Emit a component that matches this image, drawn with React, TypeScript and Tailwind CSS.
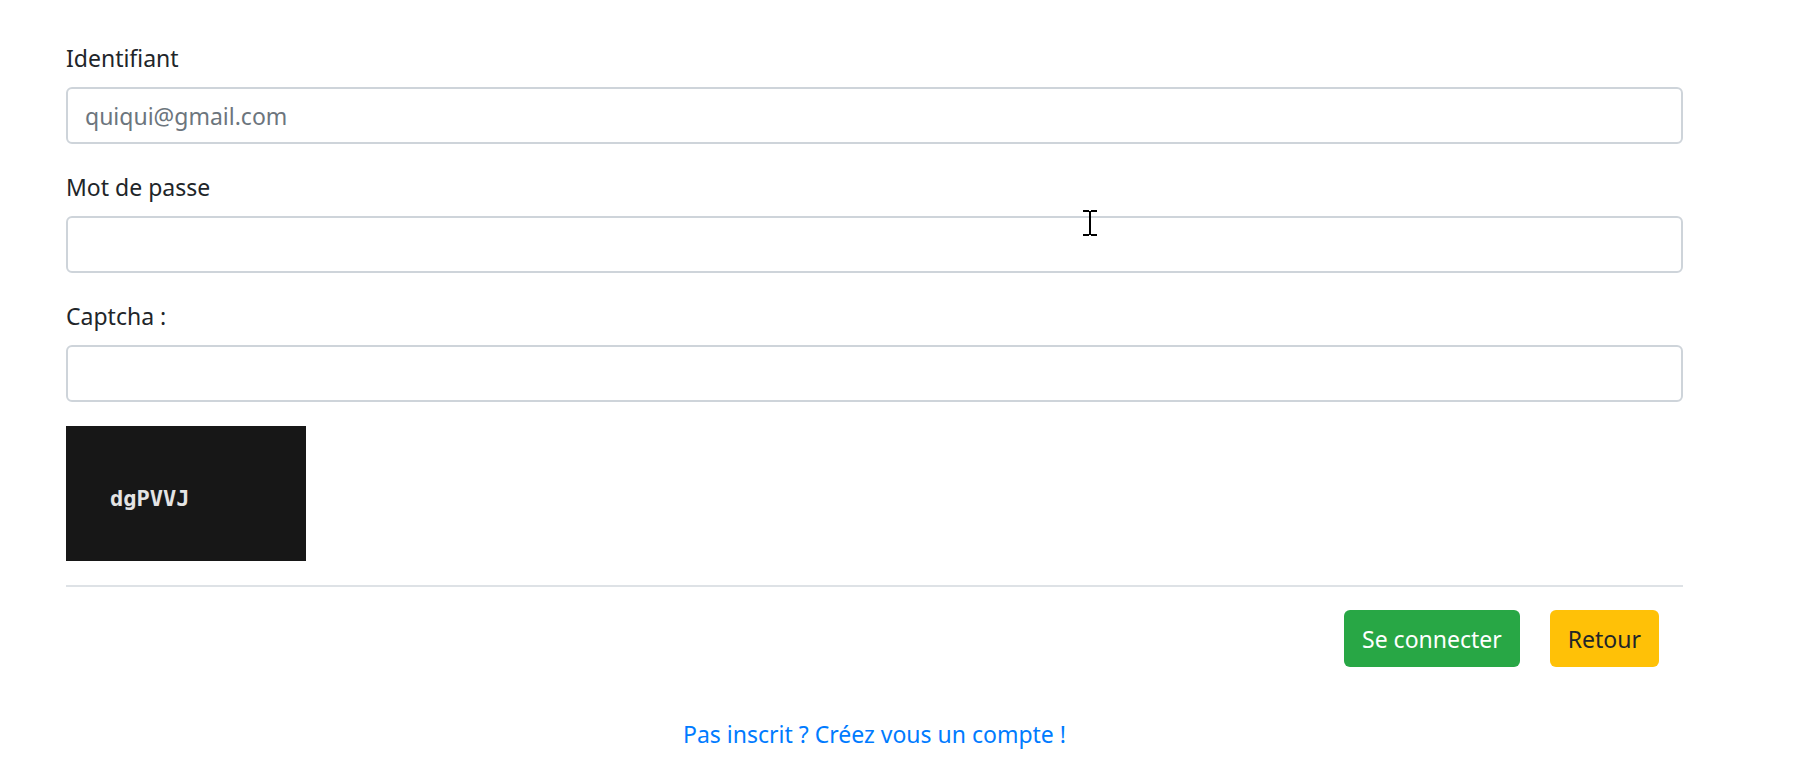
import React from "react";

type FieldProps = {
  id: string;
  label: string;
  type?: string;
  placeholder?: string;
};

function Field({ id, label, type = "text", placeholder }: FieldProps) {
  return (
    <div className="mb-6">
      <label htmlFor={id} className="mb-[10px] block leading-[38px]">
        {label}
      </label>
      <input
        id={id}
        type={type}
        placeholder={placeholder}
        className="block h-[57px] w-full rounded-md border-2 border-[#ced4da] bg-white px-[17px] text-[#495057] placeholder:text-[#6c757d]"
      />
    </div>
  );
}

function TextCursor() {
  return (
    <svg
      aria-hidden="true"
      viewBox="0 0 14 26"
      className="pointer-events-none absolute top-[210px] left-[1083px] h-[26px] w-[14px]"
      shapeRendering="crispEdges"
    >
      <path d="M0 0h6v1h2v-1h6v2h-6v22h6v2h-6v-1h-2v1h-6v-2h6v-22h-6z" fill="#000" />
    </svg>
  );
}

export default function App() {
  return (
    <main className="relative bg-white pt-[39px] pr-[110px] pl-[66px] font-['Noto_Sans',sans-serif] text-[23px] leading-9 text-[#212529]">
      <form onSubmit={(event) => event.preventDefault()}>
        <Field id="login" label="Identifiant" placeholder="quiqui@gmail.com" />
        <Field id="password" label="Mot de passe" type="password" />
        <Field id="captcha" label="Captcha :" />
        <div className="flex h-[135px] w-60 items-center bg-[#171717] pl-11 pt-[10px] font-['DejaVu_Sans_Mono',monospace] text-[22px] font-bold text-[#e4e4e4]">
          dgPVVJ
        </div>
        <div className="mt-6 flex justify-end gap-[30px] border-t-2 border-[#dee2e6] px-6 pt-[23px]">
          <button type="submit" className="h-[57px] rounded-md bg-[#28a745] px-[18px] text-white">
            Se connecter
          </button>
          <button type="button" className="h-[57px] rounded-md bg-[#ffc107] px-[18px]">
            Retour
          </button>
        </div>
      </form>
      <p className="mt-[49px] text-center">
        <a href="#inscription" className="text-[#007bff]">
          Pas inscrit ? Créez vous un compte !
        </a>
      </p>
      <TextCursor />
    </main>
  );
}
